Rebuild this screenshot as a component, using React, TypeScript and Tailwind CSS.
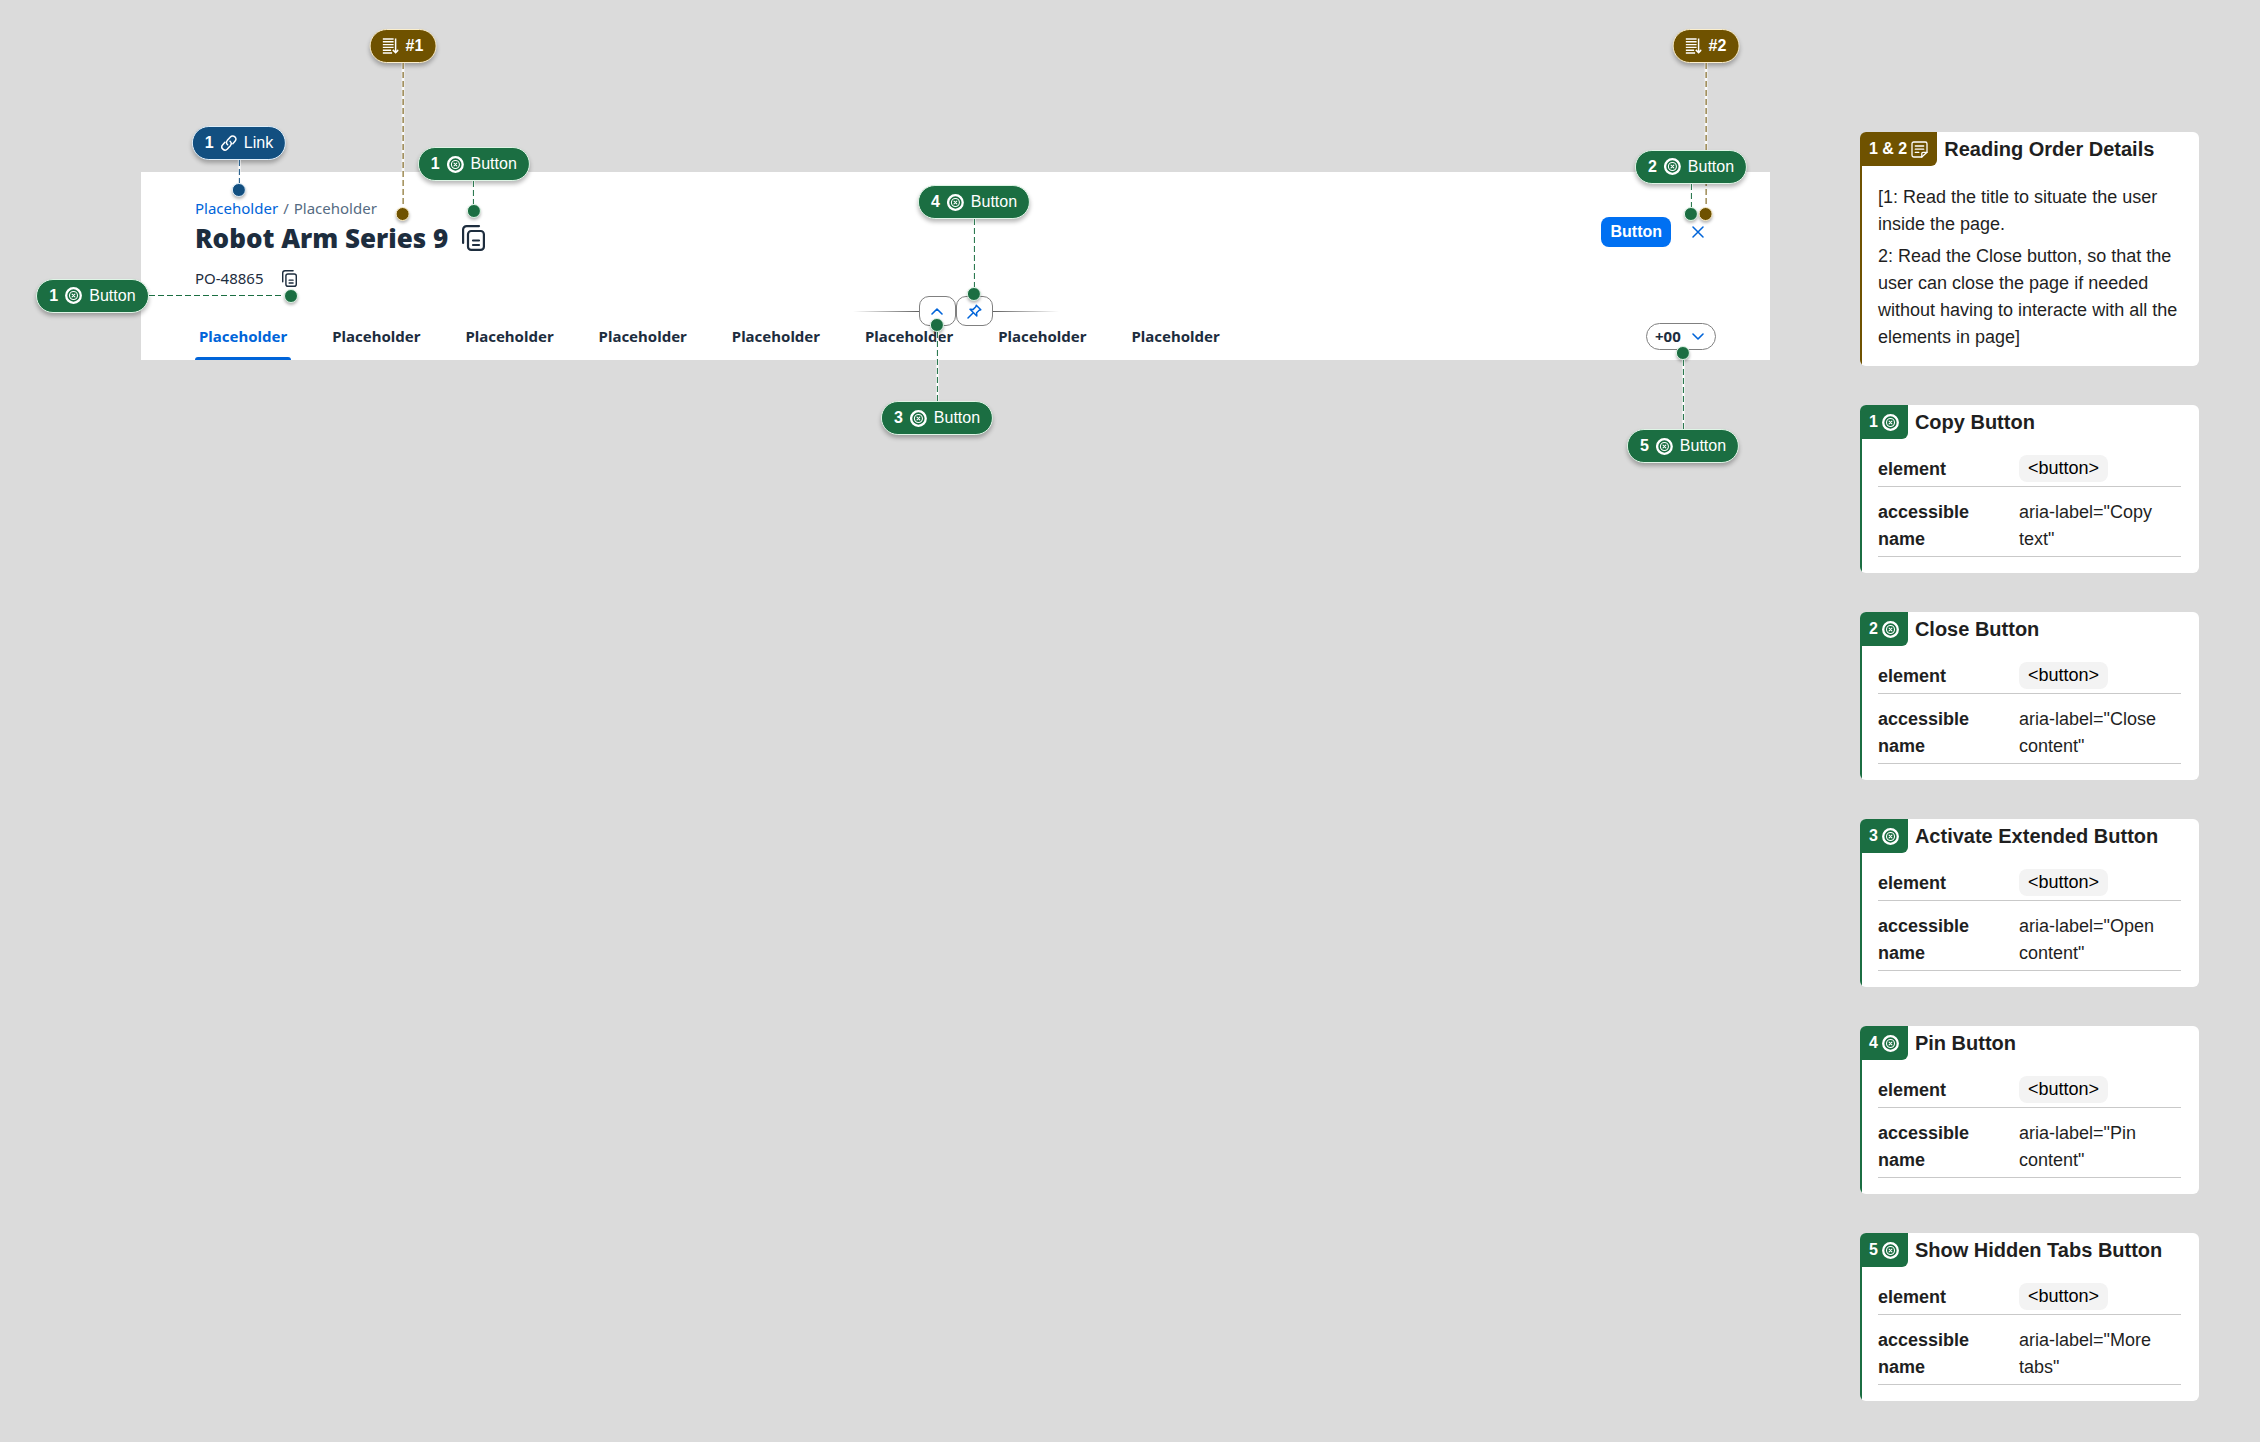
import React from 'react';

type Tone = 'green' | 'blue' | 'brown';

const fill: Record<Tone, string> = {
  green: 'bg-[#1b6e42]',
  blue: 'bg-[#124f80]',
  brown: 'bg-[#6f5200]',
};
const edge: Record<Tone, string> = {
  green: 'border-[#dff5e6]',
  blue: 'border-[#e0effa]',
  brown: 'border-[#fbeecb]',
};
const leftEdge: Record<Tone, string> = {
  green: 'border-[#1b6e42]',
  blue: 'border-[#124f80]',
  brown: 'border-[#6f5200]',
};
const dashDown: Record<Tone, string> = {
  green: 'bg-[repeating-linear-gradient(to_bottom,#1b6e42_0_6px,#ffffff_6px_9px)]',
  blue: 'bg-[repeating-linear-gradient(to_bottom,#124f80_0_6px,#ffffff_6px_9px)]',
  brown: 'bg-[repeating-linear-gradient(to_bottom,#6f5200_0_6px,#ffffff_6px_9px)]',
};

const TargetIcon = () => (
  <svg className="size-[17px] shrink-0" viewBox="0 0 17 17" fill="none" stroke="currentColor" aria-hidden="true">
    <circle cx="8.5" cy="8.5" r="7.3" strokeWidth="2.3" />
    <circle cx="8.5" cy="8.5" r="4" strokeWidth="1.1" />
    <path d="M7.100 7.100l2.800 2.800M9.900 7.100l-2.800 2.800" strokeWidth="1.1" strokeLinecap="round" />
  </svg>
);
const LinkIcon = () => (
  <svg className="size-4 shrink-0" viewBox="0 0 17 17" fill="none" stroke="currentColor" strokeWidth="1.6" strokeLinecap="round" aria-hidden="true">
    <path d="M7.2 10.4a3.4 3.4 0 0 1-.3-4.7l3.2-3.6a3.35 3.35 0 0 1 4.9 4.6l-2.3 2.5" />
    <path d="M9.8 6.6a3.4 3.4 0 0 1 .3 4.7l-3.2 3.6A3.35 3.35 0 0 1 2 10.3l2.3-2.5" />
  </svg>
);
const OrderIcon = () => (
  <svg className="size-4 shrink-0" viewBox="0 0 16 16" fill="none" stroke="currentColor" strokeWidth="1.4" aria-hidden="true">
    <path d="M0 1h11M0 3.800h11M0 6.600h11M0 9.400h11M0 12.200h8.500M0 15h9.500" />
    <path d="M13 .5v14M10.200 11.900l2.800 2.800 2.800-2.800" strokeWidth="1.500" />
  </svg>
);
const NoteIcon = () => (
  <svg className="size-[17px] shrink-0" viewBox="0 0 17 17" fill="none" stroke="currentColor" strokeWidth="1.3" strokeLinecap="round" strokeLinejoin="round" aria-hidden="true">
    <path d="M10.800 16H2.700A1.700 1.700 0 0 1 1 14.300V2.700A1.700 1.700 0 0 1 2.700 1h11.600A1.700 1.700 0 0 1 16 2.700v8.600z" />
    <path d="M10.800 16v-3.500a1.200 1.200 0 0 1 1.200-1.200h4" />
    <path d="M4.300 5h8.400M4.300 8.200h8.400M4.300 11.400h3.500" />
  </svg>
);
const CopyIcon = ({ className }: { className: string }) => (
  <svg className={className} viewBox="0 0 23 26" fill="none" stroke="currentColor" strokeWidth="2.2" strokeLinecap="round" aria-hidden="true">
    <path d="M1.100 18V4.600A3.500 3.500 0 0 1 4.600 1.100H17" />
    <rect x="6" y="6" width="15.900" height="18.900" rx="3.200" />
    <path d="M11 15.500h6M11 20h6" />
  </svg>
);
const PinIcon = () => (
  <svg className="size-[15px]" viewBox="0 0 15 15" fill="none" stroke="currentColor" strokeWidth="1.5" strokeLinecap="round" strokeLinejoin="round" aria-hidden="true">
    <path d="M9.300 1.200l4.500 4.500-1.600.5-2.600 2.600.2 3.200-6.800-6.800 3.200.2 2.600-2.600z" />
    <path d="M6 9l-5 5" />
  </svg>
);

function Pill({ tone, children }: { tone: Tone; children: React.ReactNode }) {
  return (
    <div
      className={`flex h-[34px] items-center gap-[7px] rounded-full border px-3 font-['Liberation_Sans',Arial,sans-serif] text-[16px] leading-5 font-normal whitespace-nowrap text-white shadow-[0_3px_4px_rgba(0,0,0,0.28)] ${fill[tone]} ${edge[tone]}`}
    >
      {children}
    </div>
  );
}
const ButtonPill = ({ n }: { n: number }) => (
  <Pill tone="green">
    <b>{n}</b>
    <TargetIcon />
    <span>Button</span>
  </Pill>
);
const OrderPill = ({ label }: { label: string }) => (
  <Pill tone="brown">
    <OrderIcon />
    <b>{label}</b>
  </Pill>
);
const Dot = ({ tone }: { tone: Tone }) => (
  <span className={`size-[14px] shrink-0 rounded-full border shadow-[0_2px_3px_rgba(0,0,0,0.28)] ${fill[tone]} ${edge[tone]}`} />
);
const Stem = ({ tone, length }: { tone: Tone; length: string }) => (
  <span className={`flex w-[3px] justify-center bg-white/60 ${length}`}>
    <span className={`w-px ${dashDown[tone]}`} />
  </span>
);

type CalloutProps = { tone: Tone; pill: React.ReactNode; length: string; place: string; below?: boolean };

function Callout({ tone, pill, length, place, below = false }: CalloutProps) {
  return (
    <div className={`pointer-events-none absolute flex -translate-x-1/2 items-center ${below ? 'flex-col-reverse' : 'flex-col'} ${place}`}>
      {pill}
      <Stem tone={tone} length={length} />
      <Dot tone={tone} />
    </div>
  );
}

const splitButton =
  'relative flex h-[30px] w-[37px] items-center justify-center rounded-[10px] border border-[#808080] bg-white text-[#0064d9]';

function Header() {
  return (
    <header className="bg-white px-[54px] pt-[25px] font-['Noto_Sans',sans-serif] text-[#1d2d3e]">
      <div className="flex items-start justify-between">
        <div>
          <nav aria-label="Breadcrumb" className="flex gap-[5px] text-[15px] leading-[22px] text-[#556b82]">
            <span className="relative">
              <a href="#parent" className="text-[#0064d9]">Placeholder</a>
              <Callout
                tone="blue"
                length="h-[23px]"
                place="bottom-[22px] left-[44px]"
                pill={
                  <Pill tone="blue">
                    <b>1</b>
                    <LinkIcon />
                    <span>Link</span>
                  </Pill>
                }
              />
            </span>
            <span>/</span>
            <span>Placeholder</span>
          </nav>
          <div className="relative mt-px flex items-center gap-3.5">
            <h1 className="text-[26px] leading-9 font-black">Robot Arm Series 9</h1>
            <button type="button" aria-label="Copy text" className="relative">
              <CopyIcon className="h-[26px] w-[23px]" />
              <Callout tone="green" length="h-[23px]" place="bottom-[33px] left-1/2" pill={<ButtonPill n={1} />} />
            </button>
            <Callout tone="brown" length="h-[144px]" place="bottom-[35px] left-[208px]" pill={<OrderPill label="#1" />} />
          </div>
          <div className="mt-[11px] flex items-center gap-[18px] text-[15px] leading-[22px]">
            <span>PO-48865</span>
            <button type="button" aria-label="Copy text" className="relative">
              <CopyIcon className="h-[17px] w-[15px]" />
              <div className="pointer-events-none absolute top-[9px] -right-px flex items-center">
                <ButtonPill n={1} />
                <span className="flex h-[3px] w-[135px] items-center bg-white/60">
                  <span className="h-px w-full bg-[repeating-linear-gradient(to_right,#1b6e42_0_6px,#ffffff_6px_9px)]" />
                </span>
                <Dot tone="green" />
              </div>
            </button>
          </div>
        </div>
        <div className="mt-5 mr-[11px] flex items-center gap-[19px] font-['Liberation_Sans',Arial,sans-serif]">
          <button type="button" className="h-[30px] rounded-lg bg-[#0070f2] px-[9px] text-[16px] font-bold text-white">Button</button>
          <button type="button" aria-label="Close content" className="relative flex size-[15px] items-center justify-center text-[#0064d9]">
            <svg className="size-[12px]" viewBox="0 0 12 12" stroke="currentColor" strokeWidth="1.5" strokeLinecap="round" aria-hidden="true">
              <path d="M1 1l10 10M11 1L1 11" />
            </svg>
            <Callout tone="brown" length="h-[144px]" place="bottom-[19px] left-[16px]" pill={<OrderPill label="#2" />} />
            <Callout tone="green" length="h-[23px]" place="bottom-[19px] left-px" pill={<ButtonPill n={2} />} />
          </button>
        </div>
      </div>

      <div className="relative mt-[7px] flex items-center justify-center">
        <span className="h-px w-[66px] bg-linear-to-r from-transparent to-[#606060]" />
        <button type="button" aria-label="Open content" className={splitButton}>
          <svg className="h-[7px] w-[12px]" viewBox="0 0 12 7" fill="none" stroke="currentColor" strokeWidth="1.6" strokeLinecap="round" strokeLinejoin="round" aria-hidden="true">
            <path d="M1 6l5-5 5 5" />
          </svg>
          <Callout below tone="green" length="h-[69px]" place="top-[21px] left-1/2 z-10" pill={<ButtonPill n={3} />} />
        </button>
        <button type="button" aria-label="Pin content" className={splitButton}>
          <PinIcon />
          <Callout tone="green" length="h-[68px]" place="bottom-[24px] left-1/2" pill={<ButtonPill n={4} />} />
        </button>
        <span className="h-px w-[66px] bg-linear-to-l from-transparent to-[#606060]" />
      </div>

      <div className="-mt-1 flex items-start justify-between">
        <div role="tablist" className="flex gap-[37px] text-[15px] leading-5 font-bold">
          {Array.from({ length: 8 }, (_, i) => (
            <button
              key={i}
              type="button"
              role="tab"
              aria-selected={i === 0}
              className={`flex h-[38px] flex-col px-1 pt-1 ${i === 0 ? 'text-[#0064d9]' : ''}`}
            >
              Placeholder
              <span className={`-mx-1 mt-auto h-[3px] self-stretch rounded-t-sm ${i === 0 ? 'bg-[#0064d9]' : ''}`} />
            </button>
          ))}
        </div>
        <button
          type="button"
          aria-label="More tabs"
          className="relative mt-px flex h-[27px] w-[70px] items-center justify-between rounded-full border border-[#808080] pr-[11px] pl-2 text-[15px] font-bold"
        >
          +00
          <svg className="h-[7px] w-[12px] text-[#0064d9]" viewBox="0 0 12 7" fill="none" stroke="currentColor" strokeWidth="1.6" strokeLinecap="round" strokeLinejoin="round" aria-hidden="true">
            <path d="M1 1l5 5 5-5" />
          </svg>
          <Callout below tone="green" length="h-[69px]" place="top-[22px] left-[36px]" pill={<ButtonPill n={5} />} />
        </button>
      </div>
    </header>
  );
}

type CardProps = { tone: Tone; badge: React.ReactNode; title: string; children: React.ReactNode };

function Card({ tone, badge, title, children }: CardProps) {
  return (
    <section className="overflow-hidden rounded-md bg-white">
      <div className={`border-l-2 ${leftEdge[tone]}`}>
        <div className="flex items-center gap-[7px]">
          <div className={`flex h-[34px] items-center gap-1 rounded-br-md pr-[9px] pl-[7px] text-[16px] font-bold text-white ${fill[tone]}`}>
            {badge}
          </div>
          <h2 className="text-[20px] leading-[34px] font-bold">{title}</h2>
        </div>
        {children}
      </div>
    </section>
  );
}

const specs = [
  { title: 'Copy Button', label: 'Copy text' },
  { title: 'Close Button', label: 'Close content' },
  { title: 'Activate Extended Button', label: 'Open content' },
  { title: 'Pin Button', label: 'Pin content' },
  { title: 'Show Hidden Tabs Button', label: 'More tabs' },
];

export default function App() {
  return (
    <div className="flex min-h-screen items-start gap-[90px] bg-[#dbdbdb] pt-[132px] pr-[61px] pb-10 pl-[141px] font-['Liberation_Sans',Arial,sans-serif] text-[#1f1f1f]">
      <main className="mt-10 min-w-0 flex-1">
        <Header />
      </main>
      <aside className="flex w-[339px] shrink-0 flex-col gap-[39px]">
        <Card
          tone="brown"
          title="Reading Order Details"
          badge={
            <>
              <span>{'1 & 2'}</span>
              <NoteIcon />
            </>
          }
        >
          <div className="flex flex-col gap-[5px] px-4 pt-[18px] pb-[15px] text-[18px] leading-[27px]">
            <p>[1: Read the title to situate the user inside the page.</p>
            <p>2: Read the Close button, so that the user can close the page if needed without having to interacte with all the elements in page]</p>
          </div>
        </Card>
        {specs.map((s, i) => (
          <Card
            key={s.title}
            tone="green"
            title={s.title}
            badge={
              <>
                <span>{i + 1}</span>
                <TargetIcon />
              </>
            }
          >
            <div className="pt-4 pr-[18px] pb-4 pl-4">
              <table className="w-full border-separate border-spacing-0 text-left text-[18px] leading-[27px]">
                <tbody>
                  <tr>
                    <th scope="row" className="w-[141px] border-b border-[#c9c9c9] pt-px pb-[3px] font-bold">element</th>
                    <td className="border-b border-[#c9c9c9] pb-1">
                      <span className="block w-fit rounded-lg bg-[#f3f3f3] px-[9px] text-black">{'<button>'}</span>
                    </td>
                  </tr>
                  <tr className="align-top">
                    <th scope="row" className="border-b border-[#c9c9c9] pt-3 pr-8 pb-[3px] font-bold">accessible name</th>
                    <td className="border-b border-[#c9c9c9] pt-3 pr-4 pb-[3px]">{`aria-label="${s.label}"`}</td>
                  </tr>
                </tbody>
              </table>
            </div>
          </Card>
        ))}
      </aside>
    </div>
  );
}
